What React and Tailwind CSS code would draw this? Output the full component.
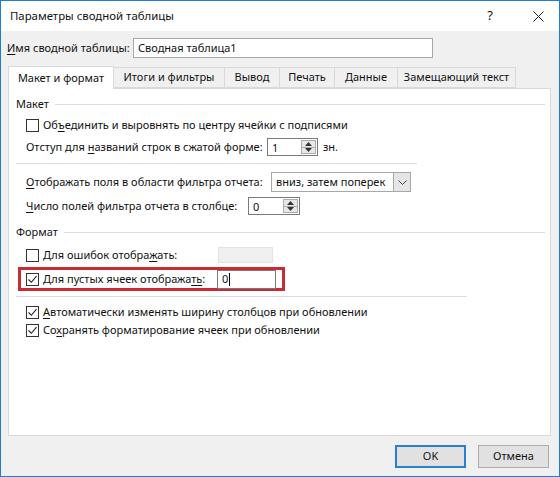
import React from "react";

const U = ({ children }) => <span className="underline underline-offset-2">{children}</span>;

function CheckBox({ checked }) {
  return (
    <span className="flex h-[13px] w-[13px] shrink-0 items-center justify-center border border-[#333333] bg-white">
      {checked && (
        <svg width="11" height="11" viewBox="0 0 11 11">
          <path d="M1.5 5.5 L4.3 8.3 L9.5 2.2" fill="none" stroke="#222" strokeWidth="1.1" />
        </svg>
      )}
    </span>
  );
}

function Spin({ value, w }) {
  return (
    <div className={`flex h-[18px] items-stretch border border-[#7a7a7a] bg-white ${w}`}>
      <div className="flex flex-1 items-center pl-[4px] leading-none">{value}</div>
      <div className="my-[1px] mr-[1px] flex w-[15px] flex-col border border-[#acacac] bg-[#e8e8e8]">
        <div className="flex flex-1 items-center justify-center border-b border-[#acacac]">
          <svg width="7" height="4" viewBox="0 0 7 4"><path d="M0 4 L3.5 0 L7 4 Z" fill="#333" /></svg>
        </div>
        <div className="flex flex-1 items-center justify-center">
          <svg width="7" height="4" viewBox="0 0 7 4"><path d="M0 0 L3.5 4 L7 0 Z" fill="#333" /></svg>
        </div>
      </div>
    </div>
  );
}

function Tab({ children, selected, w }) {
  if (selected)
    return (
      <div className={`relative z-10 -mb-px flex h-[23px] items-center justify-center border border-b-0 border-[#d9d9d9] bg-white ${w}`}>
        {children}
      </div>
    );
  return (
    <div className={`-ml-px flex h-[21px] items-center justify-center border border-[#d9d9d9] bg-[#f0f0f0] ${w}`}>
      {children}
    </div>
  );
}

export default function App() {
  return (
    <div
      className="flex h-[477px] w-[560px] flex-col whitespace-nowrap border border-[#1c7fd4] bg-[#f0f0f0] text-[11px] text-[#111]"
      style={{ fontFamily: '"Noto Sans", "Open Sans", sans-serif' }}
    >
      {/* title bar */}
      <div className="flex h-[30px] shrink-0 items-center bg-white pl-[9px]">
        <span className="text-[11.4px]">Параметры сводной таблицы</span>
        <span className="ml-auto mr-[40px] text-[13px]">?</span>
        <svg className="mr-[15px]" width="11" height="11" viewBox="0 0 11 11">
          <path d="M0.5 0.5 L10.5 10.5 M10.5 0.5 L0.5 10.5" stroke="#222" strokeWidth="1" />
        </svg>
      </div>

      {/* name row */}
      <div className="mt-[7px] flex h-[20px] items-center pl-[6px]">
        <span className="w-[126px]"><U>И</U>мя сводной таблицы:</span>
        <div className="flex h-[20px] w-[300px] items-center border border-[#a8a8a8] bg-white pl-[4px]">Сводная таблица1</div>
      </div>

      {/* tabs */}
      <div className="mt-[8px] flex h-[22px] items-end pl-[7px]">
        <Tab selected w="w-[106px]">Макет и формат</Tab>
        <Tab w="w-[112px]">Итоги и фильтры</Tab>
        <Tab w="w-[56px]">Вывод</Tab>
        <Tab w="w-[56px]">Печать</Tab>
        <Tab w="w-[64px]">Данные</Tab>
        <Tab w="w-[119px]">Замещающий текст</Tab>
      </div>

      {/* panel */}
      <div className="ml-[7px] flex h-[348px] w-[543px] flex-col border border-[#d9d9d9] bg-white">
        <div className="mt-[5px] flex h-[20px] items-center pl-[7px] pr-[5px]">
          <span>Макет</span>
          <div className="ml-[6px] h-px flex-1 bg-[#dcdcdc]" />
        </div>
        <div className="mt-[2px] flex h-[18px] items-center gap-[4px] pl-[17px]">
          <CheckBox />
          <span>Об<U>ъ</U>единить и выровнять по центру ячейки с подписями</span>
        </div>
        <div className="mt-[3px] flex h-[20px] items-center pl-[17px]">
          <span className="w-[241px]">Отступ для <U>н</U>азваний строк в сжатой форме:</span>
          <Spin value="1" w="w-[51px]" />
          <span className="ml-[5px]">зн.</span>
        </div>
        <div className="ml-[7px] mt-[6px] h-px w-[401px] bg-[#dcdcdc]" />
        <div className="mt-[8px] flex h-[20px] items-center pl-[17px]">
          <span className="w-[245px]"><U>О</U>тображать поля в области фильтра отчета:</span>
          <div className="flex h-[20px] w-[140px] items-stretch border border-[#a8a8a8] bg-white">
            <div className="flex flex-1 items-center pl-[4px]">вниз, затем поперек</div>
            <div className="flex w-[17px] items-center justify-center border-l border-[#a8a8a8] bg-[#e5e5e5]">
              <svg width="9" height="5" viewBox="0 0 9 5"><path d="M0.5 0.5 L4.5 4.5 L8.5 0.5" fill="none" stroke="#444" strokeWidth="1" /></svg>
            </div>
          </div>
        </div>
        <div className="mt-[5px] flex h-[18px] items-center pl-[17px]">
          <span className="w-[222px]"><U>Ч</U>исло полей фильтра отчета в столбце:</span>
          <Spin value="0" w="w-[52px]" />
        </div>
        <div className="mt-[7px] flex h-[20px] items-center pl-[7px] pr-[5px]">
          <span>Формат</span>
          <div className="ml-[6px] h-px flex-1 bg-[#dcdcdc]" />
        </div>
        <div className="mt-[4px] flex h-[18px] items-center pl-[17px]">
          <CheckBox />
          <span className="ml-[4px] w-[175px]">Для ошибок отобра<U>ж</U>ать:</span>
          <div className="h-[16px] w-[55px] border border-[#e3e3e3] bg-[#f0f0f0]" />
        </div>
        <div className="ml-[9px] mt-[3px] flex h-[24px] w-[267px] items-center border-[3px] border-[#cb2a35] pl-[5px]">
          <CheckBox checked />
          <span className="ml-[4px] w-[174px]">Для пустых ячеек отобража<U>ть</U>:</span>
          <div className="flex h-[19px] w-[59px] items-center border border-[#7a7a7a] bg-white pl-[4px]">
            0<span className="ml-px h-[13px] w-px bg-black" />
          </div>
        </div>
        <div className="ml-[7px] mt-[5px] h-px w-[451px] bg-[#dcdcdc]" />
        <div className="mt-[6px] flex h-[18px] items-center gap-[4px] pl-[17px]">
          <CheckBox checked />
          <span><U>А</U>втоматически изменять ширину столбцов при обновлении</span>
        </div>
        <div className="flex h-[18px] items-center gap-[4px] pl-[17px]">
          <CheckBox checked />
          <span>Со<U>х</U>ранять форматирование ячеек при обновлении</span>
        </div>
      </div>

      {/* buttons */}
      <div className="mt-[9px] flex justify-end gap-[12px] pr-[10px]">
        <button className="flex h-[23px] w-[71px] items-center justify-center border-2 border-[#2a7fd0] bg-[#e1e1e1]">OK</button>
        <button className="flex h-[23px] w-[71px] items-center justify-center border border-[#adadad] bg-[#e1e1e1]">Отмена</button>
      </div>
    </div>
  );
}
